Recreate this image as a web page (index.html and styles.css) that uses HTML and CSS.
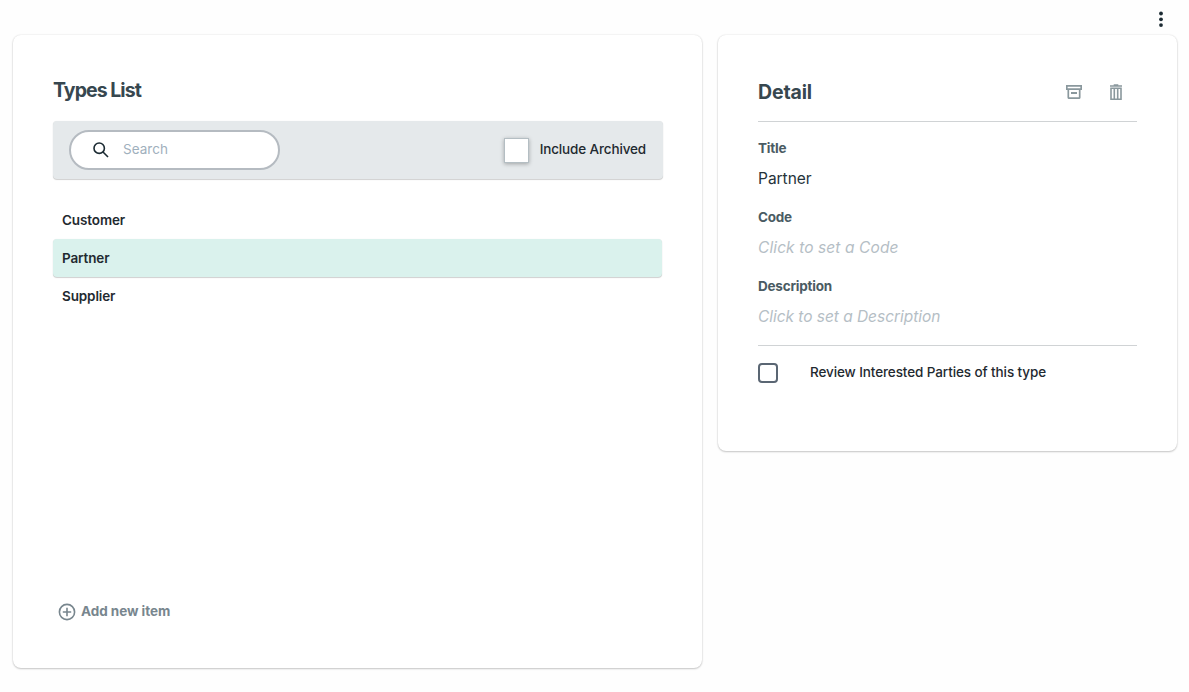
FILE: index.html
```html
<!DOCTYPE html>
<html lang="en">
<head>
<meta charset="utf-8">
<title>Types</title>
<link rel="stylesheet" href="styles.css">
</head>
<body>
<header class="topbar">
  <button class="icon-button" aria-label="More">
    <svg class="more-icon" viewBox="0 0 6 18"><circle cx="3" cy="3.5" r="1.9"/><circle cx="3" cy="9.3" r="1.9"/><circle cx="3" cy="15.1" r="1.9"/></svg>
  </button>
</header>
<main class="columns">
  <section class="card list-card">
    <h2 class="heading list-heading">Types List</h2>
    <div class="toolbar">
      <div class="search">
        <svg class="search-icon" viewBox="0 0 16 16"><circle cx="6.2" cy="6.2" r="5.2"/><path d="M10 10l5 5"/></svg>
        <span class="search-text">Search</span>
      </div>
      <div class="archived"><span class="raised-box"></span><span class="archived-text">Include Archived</span></div>
    </div>
    <ul class="items">
      <li class="item">Customer</li>
      <li class="item selected">Partner</li>
      <li class="item">Supplier</li>
    </ul>
    <div class="add">
      <svg class="add-icon" viewBox="0 0 18 18"><circle cx="9" cy="9" r="7.6"/><path d="M9 4.8v8.4M4.8 9h8.4"/></svg>
      <span class="add-text">Add new item</span>
    </div>
  </section>
  <section class="card detail-card">
    <div class="detail-head">
      <h2 class="heading detail-heading">Detail</h2>
      <div class="actions">
        <svg class="archive-icon" viewBox="0 0 16 14"><path d="M.8.8h14.4v3.4H.8zM2.3 4.2v8.2q0 .8.8.8h9.8q.8 0 .8-.8V4.2"/><path class="slot" d="M5 8h6"/></svg>
        <svg class="trash-icon" viewBox="0 0 14 16"><path d="M1 2h12M4.7 1h4.6M2 4.3h10v10.9H2zM5.3 4.3v10.9M8.7 4.3v10.9"/></svg>
      </div>
    </div>
    <div class="field"><div class="label">Title</div><div class="value">Partner</div></div>
    <div class="field"><div class="label">Code</div><div class="value empty short">Click to set a Code</div></div>
    <div class="field"><div class="label">Description</div><div class="value empty">Click to set a Description</div></div>
    <div class="review"><span class="box"></span><span class="review-text">Review Interested Parties of this type</span></div>
  </section>
</main>
</body>
</html>
```
FILE: styles.css
```css
* { box-sizing: border-box; }
html, body { height: 100%; }
body {
  margin: 0;
  background: #fefefe;
  color: #1f2a30;
  font: 500 13.5px/20px Inter, "Liberation Sans", sans-serif;
}
svg { display: block; fill: none; flex: none; }
.topbar { height: 35px; padding: 10px 25px 0 0; display: flex; justify-content: flex-end; align-items: flex-start; }
.icon-button { border: 0; padding: 0; background: none; }
.more-icon { width: 6px; height: 18px; fill: #1c2b33; }
.columns { display: flex; align-items: flex-start; gap: 16px; padding: 0 12px 0 13px; }
.card {
  background: #fff;
  border-radius: 8px;
  box-shadow: 0 1px 2px rgba(0, 0, 0, .2), 0 0 2px rgba(0, 0, 0, .12);
}
.list-card { width: 689px; height: 633px; padding: 39px 39px 0 40px; display: flex; flex-direction: column; }
.detail-card { width: 459px; height: 416px; padding: 40px 40px 0; }
.heading { margin: 0; font-size: 19.5px; line-height: 32px; font-weight: 700; color: #37474f; }
.list-heading { height: 47px; letter-spacing: -.95px; }
.toolbar {
  height: 58px;
  padding: 0 17px;
  display: flex;
  align-items: center;
  justify-content: space-between;
  background: #e5e9eb;
  border-radius: 4px;
  box-shadow: 0 1px 1px rgba(0, 0, 0, .18), 0 0 1px rgba(0, 0, 0, .1);
}
.search {
  width: 211px;
  height: 40px;
  margin-left: -1px;
  padding-left: 22px;
  display: flex;
  align-items: center;
  gap: 14px;
  border: 2px solid #b5bbc1;
  border-radius: 20px;
  background: #fff;
}
.search-icon { width: 16px; height: 16px; stroke: #1c2b33; stroke-width: 1.6; }
.search-text { margin-top: -2px; font-weight: 400; color: #9fb0bd; letter-spacing: .03px; }
.archived { display: flex; align-items: center; gap: 11px; }
.raised-box { width: 25px; height: 25px; background: #fff; border: 1px solid #b4bec3; box-shadow: 0 1px 4px rgba(0, 0, 0, .3); }
.archived-text { margin-top: -2px; letter-spacing: -.14px; }
.items { list-style: none; margin: 22px 1px 0 0; padding: 0; }
.item { height: 38px; padding: 9px; font-weight: 600; letter-spacing: -.12px; }
.selected { background: #daf2ed; border-radius: 4px; box-shadow: 0 1px 1px rgba(0, 0, 0, .18), 0 0 1px rgba(0, 0, 0, .1); }
.add { margin: auto 0 46px 5px; height: 20px; display: flex; align-items: center; gap: 5px; color: #78868e; font-weight: 700; }
.add-icon { width: 18px; height: 18px; stroke: #78868e; stroke-width: 1.6; }
.add-text { margin-top: -2px; letter-spacing: -.05px; }
.detail-head { height: 47px; display: flex; justify-content: space-between; border-bottom: 1px solid #d0d3d5; }
.detail-heading { padding-top: 1px; letter-spacing: -.15px; }
.actions { height: 34px; display: flex; align-items: center; gap: 27px; padding-right: 14px; }
.archive-icon { width: 16px; height: 14px; stroke: #8a989d; stroke-width: 1.7; }
.slot { stroke-width: 2; }
.trash-icon { width: 14px; height: 16px; stroke: #8a989d; stroke-width: 1.6; }
.detail-head + .field { padding-top: 16px; height: 85px; }
.field { height: 69px; }
.label { font-weight: 700; color: #4a5b63; letter-spacing: -.22px; }
.value { padding-top: 11px; font-size: 15.5px; font-weight: 400; letter-spacing: -.02px; color: #26333a; }
.empty { font-style: italic; color: #b5bec5; letter-spacing: -.04px; }
.short { letter-spacing: .1px; }
.review { padding-top: 16px; border-top: 1px solid #d0d3d5; display: flex; gap: 32px; }
.box { width: 20px; height: 20px; margin-top: 1px; border: 2px solid #5a6673; border-radius: 4px; }
.review-text { letter-spacing: -.1px; }
```
